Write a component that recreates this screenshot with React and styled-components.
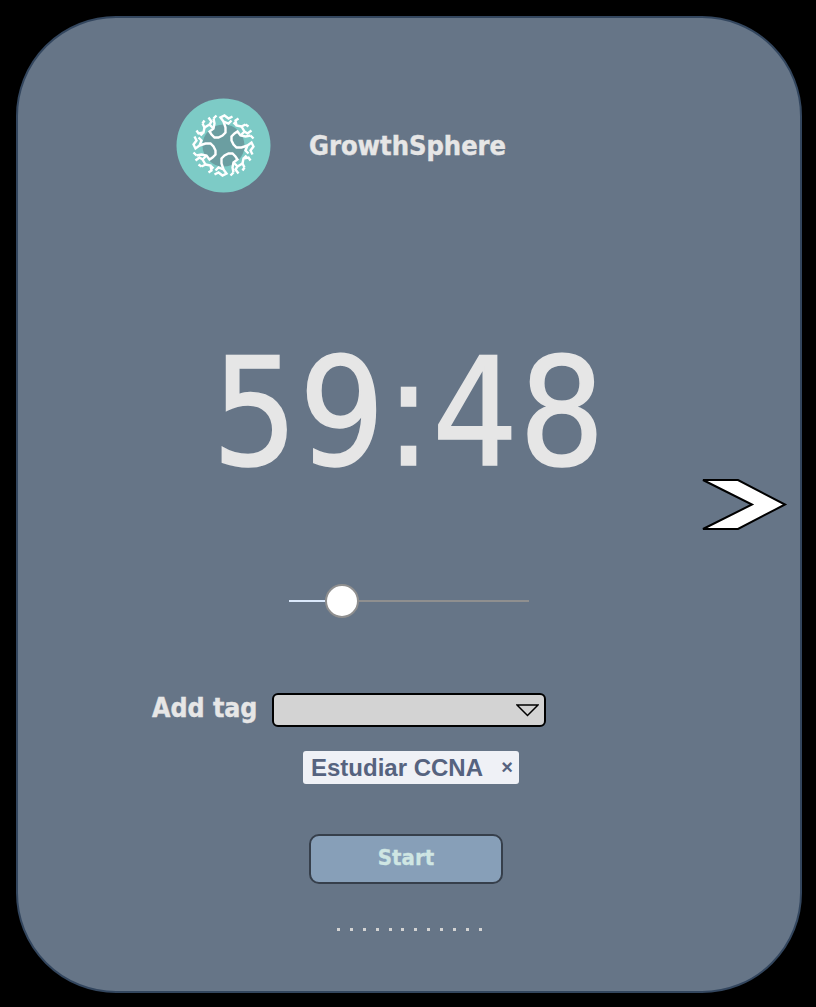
import React from 'react'
import styled, { createGlobalStyle } from 'styled-components'

const GlobalStyle = createGlobalStyle`
  html, body {
    margin: 0;
    padding: 0;
    background: #000;
  }
`

const Page = styled.div`
  width: 816px;
  height: 1007px;
  padding: 16px 14px 14px 16px;
  box-sizing: border-box;
  background: #000;
`

const Panel = styled.main`
  position: relative;
  width: 786px;
  height: 977px;
  box-sizing: border-box;
  border: 2px solid #33465e;
  border-radius: 100px;
  background: #667587;
  display: flex;
  flex-direction: column;
  font-family: "DejaVu Sans", sans-serif;
  font-stretch: condensed;
`

const Brand = styled.header`
  display: flex;
  align-items: center;
  gap: 38px;
  margin: 80px 0 0 158px;
`

const Logo = styled.svg`
  width: 95px;
  height: 95px;
  flex: none;
`

const BrandName = styled.h1`
  margin: 0;
  color: #e6e6e6;
  font-size: 27px;
  font-weight: 700;
  -webkit-text-stroke: 0.4px #e6e6e6;
`

const Timer = styled.div`
  margin-top: 125px;
  height: 190px;
  line-height: 190px;
  text-align: center;
  color: #e6e6e6;
  font-size: 150px;
  font-weight: 400;
  letter-spacing: 1px;
  -webkit-text-stroke: 1.5px #e6e6e6;
`

const NextArrow = styled.svg`
  position: absolute;
  left: 684px;
  top: 461px;
  width: 86px;
  height: 52px;
`

const Slider = styled.input`
  appearance: none;
  display: block;
  align-self: center;
  width: 240px;
  height: 34px;
  margin: 76px 0 0;
  background: transparent;

  &::-webkit-slider-runnable-track {
    height: 2px;
    background: linear-gradient(to right, #dbe9fb 0 ${(p) => p.$fill}px, #8f8f8f ${(p) => p.$fill}px);
  }

  &::-webkit-slider-thumb {
    appearance: none;
    width: 34px;
    height: 34px;
    margin-top: -16px;
    box-sizing: border-box;
    border: 2px solid #8f8f8f;
    border-radius: 50%;
    background: #fff;
  }
`

const TagRow = styled.div`
  display: flex;
  align-items: flex-start;
  gap: 15px;
  height: 34px;
  margin: 75px 0 0 134px;
`

const TagLabel = styled.label`
  width: 105px;
  line-height: 30px;
  white-space: nowrap;
  color: #e6e6e6;
  font-size: 26.500px;
  font-weight: 700;
  -webkit-text-stroke: 0.4px #e6e6e6;
`

const TagSelect = styled.div`
  width: 274px;
  height: 34px;
  box-sizing: border-box;
  border: 2px solid #000;
  border-radius: 6px;
  background: #d3d3d3;
  display: flex;
  align-items: center;
  justify-content: flex-end;
  padding-right: 5px;
`

const Caret = styled.svg`
  width: 23px;
  height: 13px;
`

const Chip = styled.div`
  align-self: flex-start;
  display: flex;
  align-items: center;
  justify-content: space-between;
  width: 216px;
  height: 33px;
  box-sizing: border-box;
  margin: 24px 0 0 285px;
  padding: 0 6px 0 8px;
  border-radius: 3px;
  background: #eff1f6;
  color: #56637f;
  font-family: "Liberation Sans", sans-serif;
  font-size: 24px;
  font-weight: 700;
  font-stretch: normal;
`

const ChipClose = styled.span`
  font-size: 20px;
`

const StartButton = styled.button`
  display: block;
  width: 194px;
  height: 50px;
  margin: 50px 0 0 291px;
  padding-bottom: 4px;
  box-sizing: border-box;
  border: 2px solid #363f4b;
  border-radius: 10px;
  background: #879fb8;
  color: #cfe6e3;
  font-family: inherit;
  font-size: 22px;
  font-weight: 700;
  font-stretch: condensed;
  -webkit-text-stroke: 0.3px #cfe6e3;
`

const Dots = styled.div`
  display: flex;
  gap: 9.900px;
  margin: 44px 0 0 319px;
`

const Dot = styled.span`
  width: 3px;
  height: 3px;
  background: #d3d3d3;
`

// one arm of the dendrite, repeated four times round the centre
const armPaths = [
  'M27 -10 L22 -9 L17 -10 L14 -14 L11 -12 L8 -9 L8 -5 L10 -1 L13 2 L18 2 L24 0',
  'M17 -10 L21 -14 L24 -12 L28 -15 M21 -14 L18 -19 L22 -21 M22 -21 L25 -19',
  'M18 -19 L13 -20 L12 -25 L15 -27 M13 -20 L10 -23',
  'M24 0 L28 -3 L30 1 L27 5 L29 9 M24 0 L22 5 L25 8 M27 -10 L30 -7',
]

const GrowthLogo = () => (
  <Logo viewBox="-47.500 -47.500 95 95">
    <circle r="47" fill="#7dcbc6" />
    <circle r="21" fill="#6b9ea1" />
    {[0, 90, 180, 270].map((angle) => (
      <g key={angle} transform={`rotate(${angle})`}>
        {armPaths.map((d) => (
          <path key={d} d={d} fill="none" stroke="#fff" strokeWidth="2.400" />
        ))}
      </g>
    ))}
  </Logo>
)

const App = () => {
  return (
    <Page>
      <GlobalStyle />
      <Panel>
        <Brand>
          <GrowthLogo />
          <BrandName>GrowthSphere</BrandName>
        </Brand>
        <Timer>59:48</Timer>
        <NextArrow viewBox="0 0 86 52">
          <path d="M1 1 H36 L83 25.500 L36 50 H1 L50 25.500 Z" fill="#fff" stroke="#000" strokeWidth="2" />
        </NextArrow>
        <Slider type="range" min="0" max="100" defaultValue="17.5" step="0.5" $fill={40} />
        <TagRow>
          <TagLabel>Add tag</TagLabel>
          <TagSelect>
            <Caret viewBox="0 0 23 13">
              <path d="M1 1 H22 L11.500 11.500 Z" fill="none" stroke="#000" strokeWidth="1.500" />
            </Caret>
          </TagSelect>
        </TagRow>
        <Chip>
          Estudiar CCNA
          <ChipClose>×</ChipClose>
        </Chip>
        <StartButton>Start</StartButton>
        <Dots>
          {Array.from({ length: 12 }, (_, i) => (
            <Dot key={i} />
          ))}
        </Dots>
      </Panel>
    </Page>
  )
}

export default App
